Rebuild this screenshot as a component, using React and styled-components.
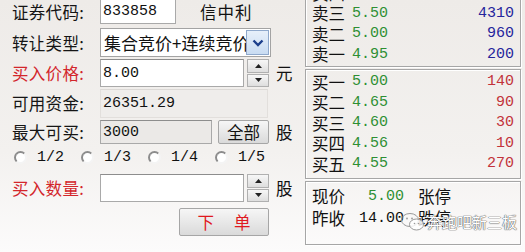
import React from 'react'
import styled, { createGlobalStyle } from 'styled-components'

const CN = `"Noto Sans CJK SC", "DejaVu Sans", sans-serif`
const MONO = `"Liberation Mono", "Noto Sans CJK SC", monospace`

const Global = createGlobalStyle`
    html, body {
        margin: 0;
        padding: 0;
        width: 525px;
        height: 252px;
        overflow: hidden;
    }
    body {
        background: linear-gradient(to bottom, #eeebe8 0%, #f3f1ef 60%, #fcfbfb 100%);
        font-family: ${CN};
        color: #111;
    }
`

const sells = [
    { name: '卖五', price: '6.00', vol: '1000' },
    { name: '卖四', price: '5.80', vol: '500' },
    { name: '卖三', price: '5.50', vol: '4310' },
    { name: '卖二', price: '5.00', vol: '960' },
    { name: '卖一', price: '4.95', vol: '200' },
]

const buys = [
    { name: '买一', price: '5.00', vol: '140' },
    { name: '买二', price: '4.65', vol: '90' },
    { name: '买三', price: '4.60', vol: '30' },
    { name: '买四', price: '4.56', vol: '10' },
    { name: '买五', price: '4.55', vol: '270' },
]

const ratios = ['1/2', '1/3', '1/4', '1/5']

const Arrow = ({ up }) => (
    <svg width="7" height="4" viewBox="0 0 7 4">
        {up ? <path d="M3.5 0 L7 4 L0 4 Z" fill="#222" /> : <path d="M0 0 L7 0 L3.5 4 Z" fill="#222" />}
    </svg>
)

const Spinner = () => (
    <Spin>
        <SpinHalf><Arrow up /></SpinHalf>
        <SpinHalf><Arrow /></SpinHalf>
    </Spin>
)

const App = () => {
    return (
        <>
            <Global />
            <Page>
                <Form>
                    <Row h={31}>
                        <Label>证券代码:</Label>
                        <Input w={76} h={25}>833858</Input>
                        <StockName>信中利</StockName>
                    </Row>
                    <Row h={31}>
                        <Label>转让类型:</Label>
                        <Select>
                            <SelectText>集合竞价+连续竞价</SelectText>
                            <DropBtn>
                                <svg width="12" height="8" viewBox="0 0 12 8">
                                    <path d="M1.5 1.5 L6 6 L10.5 1.5" fill="none" stroke="#1c3f8c" strokeWidth="2.4" />
                                </svg>
                            </DropBtn>
                        </Select>
                    </Row>
                    <Row h={30}>
                        <Label red>买入价格:</Label>
                        <Input w={144} h={28}>8.00</Input>
                        <Spinner />
                        <Unit>元</Unit>
                    </Row>
                    <Row h={30}>
                        <Label>可用资金:</Label>
                        <Input w={168} h={29} flat>26351.29</Input>
                    </Row>
                    <Row h={28}>
                        <Label>最大可买:</Label>
                        <Input w={112} h={24} disabled>3000</Input>
                        <Button w={51} h={24}>全部</Button>
                        <Unit>股</Unit>
                    </Row>
                    <RadioRow>
                        {ratios.map(r => (
                            <RadioItem key={r}>
                                <Radio />
                                <RadioText>{r}</RadioText>
                            </RadioItem>
                        ))}
                    </RadioRow>
                    <Row h={40}>
                        <Label red>买入数量:</Label>
                        <Input w={144} h={28} />
                        <Spinner />
                        <Unit>股</Unit>
                    </Row>
                    <SubmitRow>
                        <Button w={90} h={28} red>
                            <span>下</span>
                            <span>单</span>
                        </Button>
                    </SubmitRow>
                </Form>
                <Quotes>
                    <Box pt={1} pb={1}>
                        {sells.map(s => (
                            <QuoteRow key={s.name}>
                                <QName>{s.name}</QName>
                                <QPrice>{s.price}</QPrice>
                                <QVol color="#25249c">{s.vol}</QVol>
                            </QuoteRow>
                        ))}
                    </Box>
                    <Box pt={2} pb={4}>
                        {buys.map(b => (
                            <QuoteRow key={b.name}>
                                <QName>{b.name}</QName>
                                <QPrice>{b.price}</QPrice>
                                <QVol color="#c2323a">{b.vol}</QVol>
                            </QuoteRow>
                        ))}
                    </Box>
                    <Box pt={3} pb={15}>
                        <InfoRow>
                            <QName>现价</QName>
                            <InfoValue green>5.00</InfoValue>
                            <InfoLabel>张停</InfoLabel>
                        </InfoRow>
                        <InfoRow>
                            <QName>昨收</QName>
                            <InfoValue>14.00</InfoValue>
                            <InfoLabel>跌停</InfoLabel>
                        </InfoRow>
                        <Watermark>
                            <svg width="26" height="20" viewBox="0 0 26 20">
                                <ellipse cx="10" cy="8" rx="8.5" ry="6.5" fill="none" stroke="#999" strokeWidth="1" />
                                <ellipse cx="16.5" cy="12.5" rx="7" ry="5.5" fill="rgba(255,255,255,0.8)" stroke="#999" strokeWidth="1" />
                                <circle cx="7" cy="6.5" r="0.9" fill="#999" />
                                <circle cx="12" cy="6.5" r="0.9" fill="#999" />
                                <circle cx="14.5" cy="11.5" r="0.8" fill="#999" />
                                <circle cx="18.5" cy="11.5" r="0.8" fill="#999" />
                            </svg>
                            <WatermarkText>奔跑吧新三板</WatermarkText>
                        </Watermark>
                    </Box>
                </Quotes>
            </Page>
        </>
    )
}

const Page = styled.div`
    display: flex;
    width: 525px;
    height: 252px;
`
const Form = styled.div`
    width: 293px;
    padding-left: 12px;
    margin-top: -4px;
    display: flex;
    flex-direction: column;
`
const Row = styled.div`
    display: flex;
    align-items: center;
    height: ${p => p.h}px;
`
const Label = styled.div`
    width: 88px;
    flex-shrink: 0;
    font-size: 16.5px;
    letter-spacing: 0.3px;
    color: ${p => p.red ? '#d3262b' : '#151515'};
`
const Input = styled.div`
    box-sizing: border-box;
    width: ${p => p.w}px;
    height: ${p => p.h}px;
    display: flex;
    align-items: center;
    padding-left: 2px;
    font-family: ${MONO};
    font-size: 15px;
    color: #111;
    background: ${p => p.disabled ? '#ebe9e7' : p.flat ? '#efedeb' : '#fff'};
    border: 1px solid ${p => p.flat ? '#e2dfdc' : '#a9a9a9'};
    border-top-color: ${p => p.flat ? '#dcd9d6' : '#8d8d8d'};
`
const StockName = styled.div`
    margin-left: 24px;
    font-size: 16.5px;
    letter-spacing: 1px;
`
const Select = styled.div`
    box-sizing: border-box;
    width: 171px;
    height: 29px;
    display: flex;
    align-items: center;
    padding: 0 1px 0 3px;
    background: #fff;
    border: 1px solid #a3a3a3;
    overflow: hidden;
`
const SelectText = styled.div`
    flex: 1;
    overflow: hidden;
    white-space: nowrap;
    font-size: 17px;
`
const DropBtn = styled.div`
    box-sizing: border-box;
    width: 23px;
    height: 25px;
    flex-shrink: 0;
    display: flex;
    align-items: center;
    justify-content: center;
    background: linear-gradient(to bottom, #e7f0fa, #c9dcf2);
    border: 1px solid #8fa9cc;
`
const Spin = styled.div`
    width: 22px;
    height: 28px;
    margin-left: 3px;
    display: flex;
    flex-direction: column;
    gap: 1px;
`
const SpinHalf = styled.div`
    box-sizing: border-box;
    flex: 1;
    display: flex;
    align-items: center;
    justify-content: center;
    background: linear-gradient(to bottom, #f7f7f7, #dedede);
    border: 1px solid #b0b0b0;
`
const Unit = styled.div`
    margin-left: 7px;
    font-size: 16.5px;
`
const Button = styled.div`
    box-sizing: border-box;
    width: ${p => p.w}px;
    height: ${p => p.h}px;
    margin-left: ${p => p.red ? 0 : 6}px;
    display: flex;
    align-items: center;
    justify-content: center;
    gap: 20px;
    font-size: 16.5px;
    color: ${p => p.red ? '#e0181e' : '#111'};
    background: linear-gradient(to bottom, #f6f6f6, #dadada);
    border: 1px solid #a6a6a6;
    border-radius: 2px;
`
const RadioRow = styled.div`
    display: flex;
    align-items: center;
    height: 22px;
    padding-left: 2px;
`
const RadioItem = styled.div`
    width: 67px;
    display: flex;
    align-items: center;
`
const Radio = styled.span`
    box-sizing: border-box;
    width: 13px;
    height: 13px;
    border-radius: 50%;
    border: 2px solid;
    border-color: #8c8c8c #f4f4f4 #f4f4f4 #8c8c8c;
    background: #fff;
`
const RadioText = styled.span`
    margin-left: 10px;
    font-family: ${MONO};
    font-size: 15px;
`
const SubmitRow = styled.div`
    display: flex;
    padding-left: 167px;
`
const Quotes = styled.div`
    width: 216px;
    margin-top: -40px;
    display: flex;
    flex-direction: column;
    gap: 2px;
`
const Box = styled.div`
    position: relative;
    padding: ${p => p.pt}px 6px ${p => p.pb}px 6px;
    border: 1px solid #a6a6a6;
    box-shadow: inset 1px 1px 0 #fff, 1px 1px 0 #fff;
`
const QuoteRow = styled.div`
    display: flex;
    align-items: center;
    height: 20.5px;
`
const QName = styled.div`
    width: 40px;
    font-size: 16.5px;
    line-height: 1;
`
const QPrice = styled.div`
    font-family: ${MONO};
    font-size: 15px;
    color: #2e8f33;
`
const QVol = styled.div`
    margin-left: auto;
    font-family: ${MONO};
    font-size: 15px;
    color: ${p => p.color};
`
const InfoRow = styled.div`
    display: flex;
    align-items: center;
    height: 22px;
`
const InfoValue = styled.div`
    width: 52px;
    text-align: right;
    margin-right: 14px;
    font-family: ${MONO};
    font-size: 15px;
    color: ${p => p.green ? '#2e8f33' : '#111'};
`
const InfoLabel = styled.div`
    font-size: 16.5px;
`
const Watermark = styled.div`
    position: absolute;
    left: 94px;
    top: 29px;
    display: flex;
    align-items: center;
    gap: 1px;
`
const WatermarkText = styled.span`
    font-size: 15px;
    color: #fff;
    text-shadow: 0 0 1px #666, 0 0 1px #666, 0 0 1px #666;
`

export default App
